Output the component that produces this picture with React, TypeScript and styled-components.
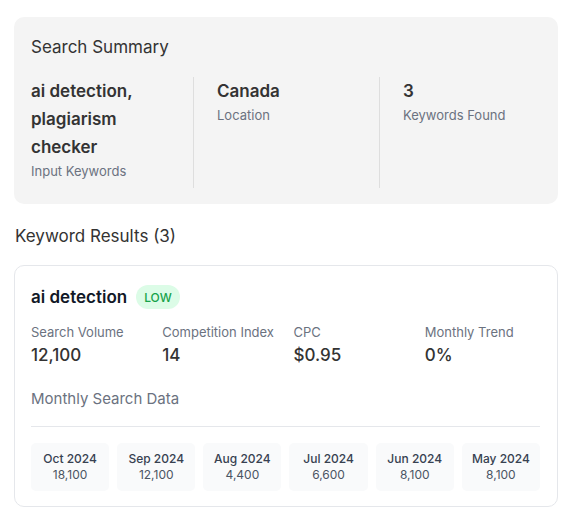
import styled, { createGlobalStyle } from "styled-components";

const GlobalStyle = createGlobalStyle`
  * { box-sizing: border-box; }
  body {
    margin: 0;
    background: #ffffff;
    font-family: "Inter", "Noto Sans", sans-serif;
  }
`;

const summary = [
  { value: "ai detection, plagiarism checker", label: "Input Keywords" },
  { value: "Canada", label: "Location" },
  { value: "3", label: "Keywords Found" },
];

const metrics = [
  { label: "Search Volume", value: "12,100" },
  { label: "Competition Index", value: "14" },
  { label: "CPC", value: "$0.95" },
  { label: "Monthly Trend", value: "0%" },
];

const months = [
  { month: "Oct 2024", volume: "18,100" },
  { month: "Sep 2024", volume: "12,100" },
  { month: "Aug 2024", volume: "4,400" },
  { month: "Jul 2024", volume: "6,600" },
  { month: "Jun 2024", volume: "8,100" },
  { month: "May 2024", volume: "8,100" },
];

const App = () => {
  return (
    <>
      <GlobalStyle />
      <Page>
        <SummaryBox>
          <SectionTitle>Search Summary</SectionTitle>
          <SummaryGrid>
            {summary.map((s) => (
              <SummaryCol key={s.label}>
                <SummaryValue>{s.value}</SummaryValue>
                <SummaryLabel>{s.label}</SummaryLabel>
              </SummaryCol>
            ))}
          </SummaryGrid>
        </SummaryBox>

        <ResultsTitle>Keyword Results (3)</ResultsTitle>

        <KeywordCard>
          <CardHeader>
            <KeywordName>ai detection</KeywordName>
            <Badge>LOW</Badge>
          </CardHeader>

          <MetricGrid>
            {metrics.map((m) => (
              <div key={m.label}>
                <MetricLabel>{m.label}</MetricLabel>
                <MetricValue>{m.value}</MetricValue>
              </div>
            ))}
          </MetricGrid>

          <MonthlyTitle>Monthly Search Data</MonthlyTitle>

          <MonthGrid>
            {months.map((m) => (
              <MonthTile key={m.month}>
                <MonthName>{m.month}</MonthName>
                <MonthVolume>{m.volume}</MonthVolume>
              </MonthTile>
            ))}
          </MonthGrid>
        </KeywordCard>
      </Page>
    </>
  );
};

const Page = styled.div`
  padding: 17px 12px 0 14px;
`;

const SummaryBox = styled.div`
  background: #f4f4f4;
  border-radius: 10px;
  padding: 16px 16px 16px 17px;
`;

const SectionTitle = styled.h2`
  margin: 0 0 16px;
  font-size: 17px;
  line-height: 28px;
  font-weight: 400;
  color: #333333;
`;

const SummaryGrid = styled.div`
  display: grid;
  grid-template-columns: 162px 186px 1fr;
`;

const SummaryCol = styled.div`
  padding: 0 24px 7px 0;

  & + & {
    border-left: 1px solid #dedede;
    padding-left: 23px;
  }
`;

const SummaryValue = styled.div`
  font-size: 17px;
  line-height: 28px;
  font-weight: 600;
  color: #333333;
`;

const SummaryLabel = styled.div`
  font-size: 13px;
  line-height: 20px;
  color: #6b7280;
`;

const ResultsTitle = styled.h2`
  margin: 18px 0 15px 1px;
  font-size: 17px;
  line-height: 28px;
  font-weight: 400;
  color: #333333;
`;

const KeywordCard = styled.div`
  background: #ffffff;
  border: 1px solid #e5e7eb;
  border-radius: 10px;
  padding: 16px 17px 15px 16px;
`;

const CardHeader = styled.div`
  display: flex;
  align-items: center;
  gap: 9px;
  height: 30px;
`;

const KeywordName = styled.h3`
  margin: 0;
  font-size: 17px;
  line-height: 28px;
  font-weight: 600;
  color: #111827;
`;

const Badge = styled.span`
  display: inline-flex;
  align-items: center;
  height: 24px;
  padding: 0 8px;
  border-radius: 999px;
  background: #dcfce7;
  color: #16a34a;
  font-size: 12px;
  font-weight: 500;
`;

const MetricGrid = styled.div`
  display: grid;
  grid-template-columns: repeat(4, 1fr);
  gap: 16px;
  margin-top: 10px;
`;

const MetricLabel = styled.div`
  font-size: 13px;
  line-height: 20px;
  color: #6b7280;
`;

const MetricValue = styled.div`
  font-size: 17px;
  line-height: 26px;
  font-weight: 500;
  color: #333333;
`;

const MonthlyTitle = styled.div`
  margin-top: 20px;
  padding-bottom: 16px;
  border-bottom: 1px solid #e5e7eb;
  font-size: 15px;
  line-height: 22px;
  color: #6b7280;
`;

const MonthGrid = styled.div`
  display: grid;
  grid-template-columns: repeat(6, 1fr);
  gap: 8px;
  margin-top: 16px;
`;

const MonthTile = styled.div`
  background: #f9fafb;
  border-radius: 5px;
  padding: 8px 4px;
  text-align: center;
`;

const MonthName = styled.div`
  font-size: 12px;
  line-height: 16px;
  font-weight: 500;
  color: #374151;
`;

const MonthVolume = styled.div`
  font-size: 12px;
  line-height: 16px;
  color: #4b5563;
`;

export default App;
